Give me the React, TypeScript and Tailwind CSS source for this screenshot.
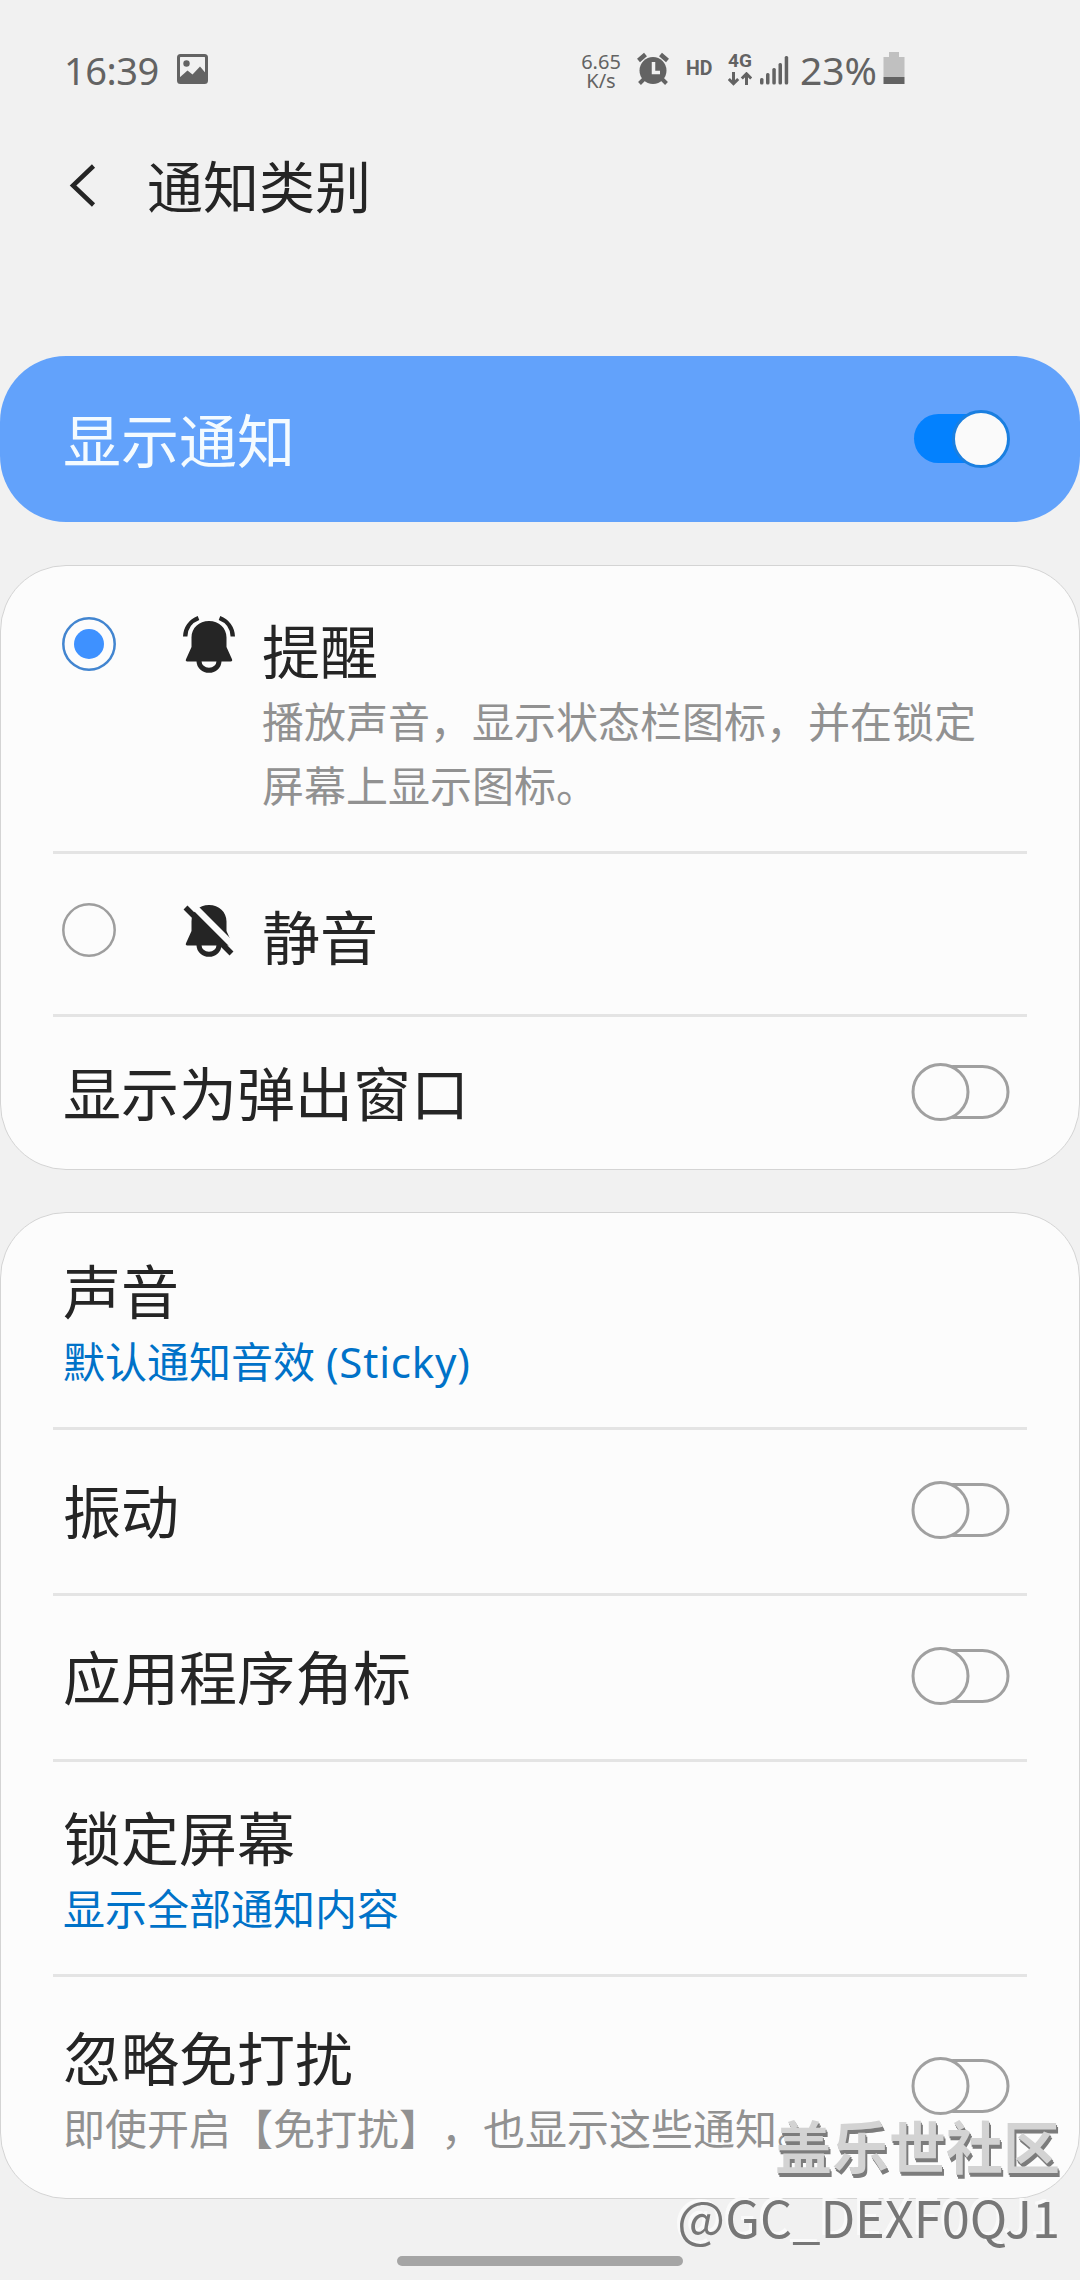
import type { ReactNode } from 'react';

const Switch = ({ on = false }: { on?: boolean }) => (
  <svg width="100" height="60" viewBox="0 0 100 60" className="shrink-0">
    {on ? (
      <>
        <rect x="3" y="5" width="92" height="49" rx="24.5" fill="#0381fe" />
        <circle cx="70" cy="30" r="27.5" fill="#fafafa" stroke="#1a7fe0" strokeWidth="3" />
      </>
    ) : (
      <>
        <rect x="18" y="4.5" width="80" height="51" rx="25.5" fill="none" stroke="#a0a0a0" strokeWidth="3" />
        <circle cx="30.5" cy="30" r="27.5" fill="#fcfcfc" stroke="#a0a0a0" strokeWidth="3" />
      </>
    )}
  </svg>
);

const Radio = ({ checked = false }: { checked?: boolean }) => (
  <svg width="54" height="54" viewBox="0 0 54 54" className="shrink-0">
    <circle cx="27" cy="27" r="25.7" fill="none" stroke={checked ? '#4285d0' : '#9e9e9e'} strokeWidth="2.5" />
    {checked && <circle cx="27" cy="27" r="15" fill="#3e91ff" />}
  </svg>
);

const BellOn = () => (
  <svg width="54" height="58" viewBox="0 0 54 58" fill="#252525" className="shrink-0">
    <path d="M27 6c-10 0-17.500 7-17.500 16.500V32L4 44.200c-.6 1.300.1 2.300 1.300 2.300h43.400c1.200 0 1.900-1 1.300-2.300L44.500 32v-9.500C44.500 13 37 6 27 6z" />
    <path d="M17 46a10 9.300 0 0 0 20 0" fill="none" stroke="#252525" strokeWidth="5" />
    <path d="M3.200 21.500C3.500 13 8.500 6 16.500 3M50.800 21.500C50.500 13 45.500 6 37.500 3" fill="none" stroke="#252525" strokeWidth="4.400" />
  </svg>
);

const BellOff = () => (
  <svg width="54" height="58" viewBox="0 0 54 58" className="shrink-0">
    <path d="M27 6c-10 0-17.500 7-17.500 16.500V32L4 44.200c-.6 1.300.1 2.300 1.300 2.300h43.400c1.200 0 1.900-1 1.300-2.300L44.500 32v-9.500C44.500 13 37 6 27 6z" fill="#252525" />
    <path d="M17 46a10 9.300 0 0 0 20 0" fill="none" stroke="#252525" strokeWidth="5" />
    <path d="M7 2.500L56 51.500" stroke="#fcfcfc" strokeWidth="6.500" />
    <path d="M3.500 8.500L49.500 54.500" stroke="#252525" strokeWidth="5.500" />
  </svg>
);

const Divider = () => <div className="mx-[52px] h-[3px] shrink-0 bg-[#e4e4e4]" />;

const Label = ({ children }: { children: ReactNode }) => (
  <div className="text-[58px] leading-[70px] text-[#252525]">{children}</div>
);

const Card = ({ children }: { children: ReactNode }) => (
  <div className="flex flex-col rounded-[66px] border border-[#d4d4d4] bg-[#fcfcfc]">{children}</div>
);

const StatusBar = () => (
  <div className="flex h-[140px] items-start text-[#636363]">
    <div className="ml-[64px] mt-[45px] h-[50px] w-[98px] text-[38px] leading-[50px] tracking-[-0.5px]">16:39</div>
    <svg width="31" height="30" viewBox="0 0 31 30" className="ml-[15px] mt-[54px]">
      <rect x="1.500" y="1.500" width="28" height="27" rx="2" fill="none" stroke="#636363" strokeWidth="3" />
      <circle cx="9.500" cy="9.500" r="3.200" fill="#636363" />
      <path d="M2 24L10.500 16.500l5 4L23 12.500l6 7V28H2z" fill="#636363" />
    </svg>
    <div className="ml-[372px] mt-[52px] w-[42px] text-center text-[20px] leading-[19px]">
      <div>6.65</div>
      <div>K/s</div>
    </div>
    <svg width="34" height="34" viewBox="0 0 34 34" className="ml-[14px] mt-[52px]">
      <circle cx="17" cy="18.500" r="13.500" fill="#636363" />
      <path d="M2.500 8.500L9.500 2.500M31.500 8.500L24.500 2.500" stroke="#636363" strokeWidth="4.500" />
      <path d="M8 27l-4.500 4.500M26 27l4.500 4.500" stroke="#636363" strokeWidth="4" />
      <path d="M17.500 10v10.500H24" fill="none" stroke="#f1f1f1" strokeWidth="3.500" />
    </svg>
    <div className="ml-[16px] mt-[58px] w-[28px] font-[Roboto,sans-serif] text-[19.500px] font-bold leading-[22px]">HD</div>
    <div className="ml-[14px] mt-[50px] w-[27px]">
      <div className="font-[Roboto,sans-serif] text-[19px] font-bold leading-[22px]">4G</div>
      <svg width="24" height="14" viewBox="0 0 24 14" className="block">
        <path d="M5.500 0v11M.8 7l4.700 4.700L10.200 7M18.500 13V2M13.800 6.500l4.700-4.700 4.700 4.700" fill="none" stroke="#636363" strokeWidth="3" />
      </svg>
    </div>
    <svg width="29" height="29" viewBox="0 0 29 29" className="ml-[5px] mt-[56px]" fill="#636363">
      <rect x="0" y="22" width="3.500" height="6.500" rx="1.500" />
      <rect x="6" y="17" width="3.500" height="11.500" rx="1.500" />
      <rect x="12.300" y="12" width="3.500" height="16.500" rx="1.500" />
      <rect x="18.500" y="7" width="3.500" height="21.500" rx="1.500" />
      <rect x="24.700" y="0" width="3.500" height="28.500" rx="1.500" />
    </svg>
    <div className="ml-[11px] mt-[45px] w-[80px] whitespace-nowrap text-[39px] leading-[50px]">23%</div>
    <svg width="22" height="32" viewBox="0 0 22 32" className="ml-[3px] mt-[52px]">
      <path d="M6 0h10v5h5.500v20H.5V5H6z" fill="#c0c0c0" />
      <rect x=".5" y="25" width="21" height="7" fill="#636363" />
    </svg>
  </div>
);

export default function App() {
  return (
    <div className="relative flex h-[2280px] w-[1080px] flex-col overflow-hidden bg-[#f1f1f1] font-['Noto_Sans','Noto_Sans_CJK_SC',sans-serif] [text-spacing-trim:space-all]">
      <StatusBar />

      <div className="flex h-[216px] items-start">
        <svg width="28" height="44" viewBox="0 0 28 44" className="ml-[69px] mt-[24px]">
          <path d="M24.500 2L4 21.500 24.500 41" fill="none" stroke="#252525" strokeWidth="4.500" />
        </svg>
        <h1 className="ml-[50px] mt-[11px] text-[56px] leading-[70px] text-[#252525]">通知类别</h1>
      </div>

      <div className="flex h-[166px] shrink-0 items-center justify-between rounded-[66px] bg-[#62a2fb] pl-[63px] pr-[69px]">
        <div className="mt-[3px] text-[58px] leading-[70px] text-[#f4fbff]">显示通知</div>
        <Switch on />
      </div>

      <div className="mt-[43px]">
        <Card>
          <div className="flex h-[285px] items-start pl-[61px]">
            <div className="mt-[51px]"><Radio checked /></div>
            <div className="ml-[66px] mt-[49px]"><BellOn /></div>
            <div className="ml-[26px] mt-[51px]">
              <Label>提醒</Label>
              <p className="mt-[3px] text-[42px] leading-[64px] text-[#919191]">
                播放声音，显示状态栏图标，并在锁定<br />屏幕上显示图标。
              </p>
            </div>
          </div>
          <Divider />
          <div className="flex h-[160px] items-start pl-[61px]">
            <div className="mt-[49px]"><Radio /></div>
            <div className="ml-[66px] mt-[45px]"><BellOff /></div>
            <div className="ml-[26px] mt-[49px]"><Label>静音</Label></div>
          </div>
          <Divider />
          <div className="flex h-[152px] items-start justify-between pl-[62px] pr-[69px]">
            <div className="mt-[42px]"><Label>显示为弹出窗口</Label></div>
            <div className="mt-[45px]"><Switch /></div>
          </div>
        </Card>
      </div>

      <div className="mt-[42px]">
        <Card>
          <div className="h-[214px] pl-[62px] pt-[44px]">
            <Label>声音</Label>
            <p className="mt-[5px] text-[42px] leading-[60px] text-[#0072c8]">
              默认通知音效 <span className="tracking-[0.8px]">(Sticky)</span>
            </p>
          </div>
          <Divider />
          <div className="flex h-[163px] items-start justify-between pl-[62px] pr-[69px]">
            <div className="mt-[47px]"><Label>振动</Label></div>
            <div className="mt-[50px]"><Switch /></div>
          </div>
          <Divider />
          <div className="flex h-[163px] items-start justify-between pl-[62px] pr-[69px]">
            <div className="mt-[47px]"><Label>应用程序角标</Label></div>
            <div className="mt-[50px]"><Switch /></div>
          </div>
          <Divider />
          <div className="h-[212px] pl-[62px] pt-[42px]">
            <Label>锁定屏幕</Label>
            <p className="mt-[5px] text-[42px] leading-[60px] text-[#0072c8]">显示全部通知内容</p>
          </div>
          <Divider />
          <div className="flex h-[221px] items-start justify-between pl-[62px] pr-[69px]">
            <div className="mt-[47px] w-[760px] whitespace-nowrap">
              <Label>忽略免打扰</Label>
              <p className="mt-[5px] text-[42px] leading-[60px] text-[#919191]">即使开启【免打扰】，也显示这些通知。</p>
            </div>
            <div className="mt-[79px]"><Switch /></div>
          </div>
        </Card>
      </div>

      {/* gesture bar */}
      <div className="mx-auto mt-[57px] h-[10px] w-[286px] shrink-0 rounded-full bg-[#a5a5a5]" />

      {/* watermark over the page corner */}
      <div className="absolute bottom-0 right-[20px] flex flex-col items-end whitespace-nowrap font-['Noto_Sans_CJK_SC',sans-serif]">
        <div className="text-[57px] font-bold leading-[70px] text-[#d3d3d3] [text-shadow:1px_2px_0_#7c7c7c,2px_4px_0_#7c7c7c]">盖乐世社区</div>
        <div className="mb-[27px] text-[50.500px] leading-[74px] text-[#777777] [text-shadow:-3px_-3px_0_#fafafa]">@GC_DEXF0QJ1</div>
      </div>
    </div>
  );
}
